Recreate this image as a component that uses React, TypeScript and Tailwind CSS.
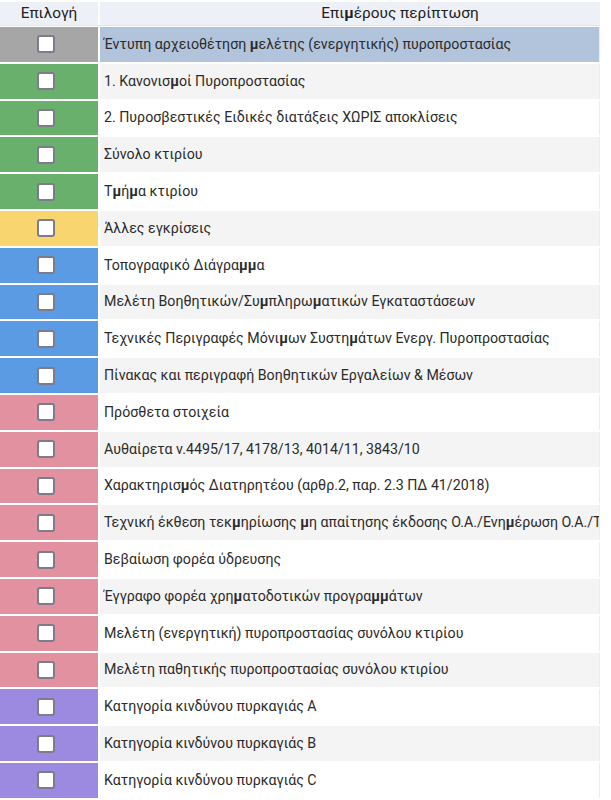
import React from 'react';

type Row = { text: string; color: string };

const rows: Row[] = [
  { text: 'Έντυπη αρχειοθέτηση µελέτης (ενεργητικής) πυροπροστασίας', color: 'bg-[#a6a6a6]' },
  { text: '1. Κανονισµοί Πυροπροστασίας', color: 'bg-[#68b06b]' },
  { text: '2. Πυροσβεστικές Ειδικές διατάξεις ΧΩΡΙΣ αποκλίσεις', color: 'bg-[#68b06b]' },
  { text: 'Σύνολο κτιρίου', color: 'bg-[#68b06b]' },
  { text: 'Τµήµα κτιρίου', color: 'bg-[#68b06b]' },
  { text: 'Άλλες εγκρίσεις', color: 'bg-[#f9d570]' },
  { text: 'Τοπογραφικό Διάγραµµα', color: 'bg-[#5b9be4]' },
  { text: 'Μελέτη Βοηθητικών/Συµπληρωµατικών Εγκαταστάσεων', color: 'bg-[#5b9be4]' },
  { text: 'Τεχνικές Περιγραφές Μόνιµων Συστηµάτων Ενεργ. Πυροπροστασίας', color: 'bg-[#5b9be4]' },
  { text: 'Πίνακας και περιγραφή Βοηθητικών Εργαλείων & Μέσων', color: 'bg-[#5b9be4]' },
  { text: 'Πρόσθετα στοιχεία', color: 'bg-[#e291a1]' },
  { text: 'Αυθαίρετα ν.4495/17, 4178/13, 4014/11, 3843/10', color: 'bg-[#e291a1]' },
  { text: 'Χαρακτηρισµός Διατηρητέου (αρθρ.2, παρ. 2.3 ΠΔ 41/2018)', color: 'bg-[#e291a1]' },
  { text: 'Τεχνική έκθεση τεκµηρίωσης µη απαίτησης έκδοσης Ο.Α./Ενηµέρωση Ο.Α./Τ', color: 'bg-[#e291a1]' },
  { text: 'Βεβαίωση φορέα ύδρευσης', color: 'bg-[#e291a1]' },
  { text: 'Έγγραφο φορέα χρηµατοδοτικών προγραµµάτων', color: 'bg-[#e291a1]' },
  { text: 'Μελέτη (ενεργητική) πυροπροστασίας συνόλου κτιρίου', color: 'bg-[#e291a1]' },
  { text: 'Μελέτη παθητικής πυροπροστασίας συνόλου κτιρίου', color: 'bg-[#e291a1]' },
  { text: 'Κατηγορία κινδύνου πυρκαγιάς A', color: 'bg-[#9c89e0]' },
  { text: 'Κατηγορία κινδύνου πυρκαγιάς B', color: 'bg-[#9c89e0]' },
  { text: 'Κατηγορία κινδύνου πυρκαγιάς C', color: 'bg-[#9c89e0]' },
];

// the source uses the micro sign, which renders heavier than the rest
const Label: React.FC<{ text: string }> = ({ text }) => (
  <>
    {text.split('µ').map((part, i) => (
      <React.Fragment key={i}>
        {i > 0 && <span className="font-bold">µ</span>}
        {part}
      </React.Fragment>
    ))}
  </>
);

const Checkbox: React.FC = () => (
  <div className="w-[18px] h-[18px] rounded-[3px] border-2 border-[#7d7c8c] bg-white" />
);

export default function App() {
  return (
    <div className="w-[600px] bg-white pt-[2px] font-['Roboto','Liberation_Sans',sans-serif] text-[14.2px] text-[#2b2b2b]">
      <div className="flex h-[24px] gap-[2px] border-b border-[#e4e6ee] text-[15.4px] text-[#222]">
        <div className="w-[98px] flex items-center justify-center bg-[#eef0f8]">Επιλογή</div>
        <div className="flex-1 flex items-center justify-center pl-[100px] bg-[#eef0f8]">
          <Label text="Επιµέρους περίπτωση" />
        </div>
      </div>
      <div className="flex flex-col gap-[2px] pt-[1px]">
        {rows.map((r, i) => (
          <div key={i} className="flex h-[34.8px] gap-[2px]">
            <div className={`w-[98px] flex items-center justify-center pr-[6px] ${r.color}`}>
              <Checkbox />
            </div>
            <div
              className={`flex-1 flex items-center pl-[4px] whitespace-pre overflow-hidden border-r border-[#ececf0] ${
                i === 0 ? 'bg-[#b1c4dc]' : i % 2 === 1 ? 'bg-[#f4f4f4]' : 'bg-white'
              }`}
            >
              <Label text={r.text} />
            </div>
          </div>
        ))}
      </div>
    </div>
  );
}
